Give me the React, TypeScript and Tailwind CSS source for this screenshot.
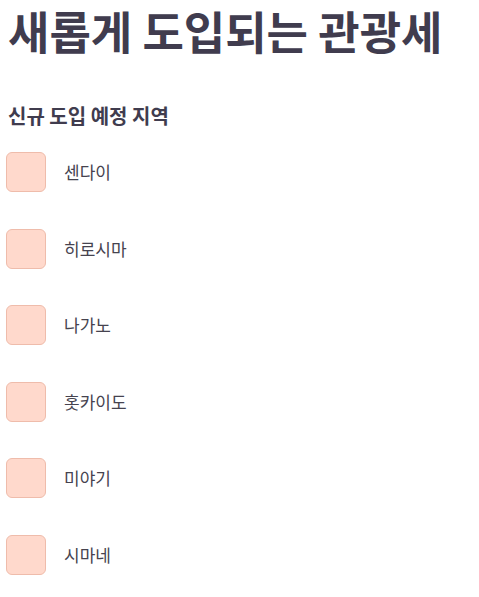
import React from 'react';

const regions = ['센다이', '히로시마', '나가노', '홋카이도', '미야기', '시마네'];

const App: React.FC = () => {
    return (
        <div className="px-2" style={{ fontFamily: '"Noto Sans CJK KR", "Noto Sans", sans-serif' }}>
            <h1 className="text-[45px] font-bold leading-[62px] whitespace-nowrap text-[#403c4e]">새롭게 도입되는 관광세</h1>
            <h2 className="mt-[40px] text-[20px] font-bold leading-[28px] text-[#403c4e]">신규 도입 예정 지역</h2>
            <ul className="mt-[22px] flex flex-col gap-[36.5px]">
                {regions.map((name) => (
                    <li key={name} className="flex items-center gap-[18px] -ml-[2px]">
                        <div className="h-[40px] w-[40px] rounded-[6px] border border-[#efbcab] bg-[#ffd9cc]" />
                        <span className="text-[17px] text-[#46434f]">{name}</span>
                    </li>
                ))}
            </ul>
        </div>
    );
};

export default App;
